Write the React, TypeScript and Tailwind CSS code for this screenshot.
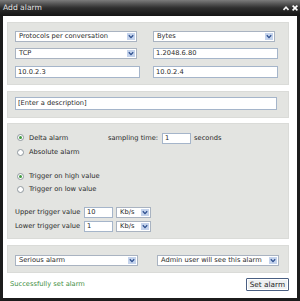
import React from "react";

const F = { fontFamily: '"DejaVu Sans", Verdana, sans-serif' };

function Arrow() {
  return (
    <div className="absolute right-[1px] top-[1px] bottom-[1px] w-[8px] bg-[#c4d3ec] flex items-center justify-center">
      <svg width="6" height="5" viewBox="0 0 6 5">
        <path d="M0.8 1.2 L3 3.6 L5.2 1.2" fill="none" stroke="#2d4f8e" strokeWidth="1.3" />
      </svg>
    </div>
  );
}

function Select({ text, w, h = 11 }: { text: string; w: number; h?: number }) {
  return (
    <div
      className="relative bg-white border border-[#a9b3c1] text-[#2a2a2a] flex items-center pl-[3px] leading-none whitespace-nowrap overflow-hidden"
      style={{ width: w, height: h }}
    >
      <span>{text}</span>
      <Arrow />
    </div>
  );
}

function Input({ text, w, h = 12 }: { text: string; w: number; h?: number }) {
  return (
    <div
      className="bg-white border border-[#a5b5ca] text-[#2a2a2a] flex items-center pl-[2px] leading-none whitespace-nowrap overflow-hidden"
      style={{ width: w, height: h }}
    >
      {text}
    </div>
  );
}

function Radio({ checked }: { checked?: boolean }) {
  return (
    <div className="w-[7px] h-[7px] rounded-full border border-[#8f979e] bg-white flex items-center justify-center ml-[2px] mr-[5px] shrink-0">
      {checked && <div className="w-[3px] h-[3px] rounded-full bg-[#3e9a3e]" />}
    </div>
  );
}

export default function App() {
  return (
    <div className="w-[300px] h-[301px] bg-[#1c1c1c] flex flex-col text-[6.7px] text-[#2a2a2a]" style={F}>
      <div className="h-[16px] shrink-0 bg-gradient-to-b from-[#7c7c7c] via-[#2e2e2e] to-[#151515] flex items-center justify-between pl-[3px] pr-[2px]">
        <span className="text-[7.6px] text-[#e6e6e6] leading-none">Add alarm</span>
        <div className="flex items-center gap-[3px]">
          <svg width="6" height="5" viewBox="0 0 6 5">
            <path d="M0.5 4 L3 1.2 L5.5 4" fill="none" stroke="#f2f2f2" strokeWidth="1.6" />
          </svg>
          <svg width="6" height="6" viewBox="0 0 6 6">
            <path d="M0.6 0.6 L5.4 5.4 M5.4 0.6 L0.6 5.4" stroke="#ffffff" strokeWidth="1.6" />
          </svg>
        </div>
      </div>
      <div className="flex-1 mx-[3px] mb-[3px] bg-white pl-[4px] pr-[8px] pt-[6px] flex flex-col">
        {/* Panel 1 */}
        <div className="h-[63px] bg-[#e3e4e1] border border-[#dadbd8] pt-[8px] pl-[7px] flex">
          <div className="w-[138px] flex flex-col gap-[6px]">
            <Select text="Protocols per conversation" w={122} />
            <Select text="TCP" w={122} />
            <div className="mt-[1px]">
              <Input text="10.0.2.3" w={125} />
            </div>
          </div>
          <div className="flex flex-col gap-[6px]">
            <Select text="Bytes" w={122} />
            <Input text="1.2048.6.80" w={125} h={11} />
            <div className="mt-[1px]">
              <Input text="10.0.2.4" w={125} />
            </div>
          </div>
        </div>
        {/* Panel 2 */}
        <div className="mt-[6px] h-[27px] bg-[#e3e4e1] border border-[#dadbd8] pt-[5px] pl-[7px]">
          <Input text="[Enter a description]" w={262} h={13} />
        </div>
        {/* Panel 3 */}
        <div className="mt-[5px] h-[116px] bg-[#e3e4e1] border border-[#dadbd8] pt-[7px] pl-[7px] flex flex-col">
          <div className="h-[14px] flex items-center">
            <div className="w-[93px] flex items-center">
              <Radio checked />
              <span>Delta alarm</span>
            </div>
            <span>sampling time:</span>
            <div className="ml-[4px]">
              <Input text="1" w={29} h={11} />
            </div>
            <span className="ml-[3px]">seconds</span>
          </div>
          <div className="h-[14px] flex items-center">
            <Radio />
            <span>Absolute alarm</span>
          </div>
          <div className="mt-[11px] h-[13px] flex items-center">
            <Radio checked />
            <span>Trigger on high value</span>
          </div>
          <div className="h-[13px] flex items-center">
            <Radio />
            <span>Trigger on low value</span>
          </div>
          <div className="mt-[9px] h-[14px] flex items-center">
            <span className="w-[69px] whitespace-nowrap">Upper trigger value</span>
            <Input text="10" w={29} h={11} />
            <div className="ml-[3px]">
              <Select text="Kb/s" w={35} />
            </div>
          </div>
          <div className="h-[14px] flex items-center">
            <span className="w-[69px] whitespace-nowrap">Lower trigger value</span>
            <Input text="1" w={29} h={11} />
            <div className="ml-[3px]">
              <Select text="Kb/s" w={35} />
            </div>
          </div>
        </div>
        {/* Panel 4 */}
        <div className="mt-[6px] h-[28px] bg-[#e3e4e1] border border-[#dadbd8] pt-[9px] pl-[7px] flex">
          <div className="w-[142px]">
            <Select text="Serious alarm" w={123} />
          </div>
          <Select text="Admin user will see this alarm" w={122} />
        </div>
        {/* Footer */}
        <div className="mt-[5px] flex items-center justify-between">
          <span className="ml-[3px] text-[#3f8f3f]">Successfully set alarm</span>
          <div className="h-[13px] px-[3px] border border-[#4a5f82] bg-[#eef0f2] rounded-[1px] flex items-center leading-none text-[7.3px] text-[#1e1e1e] shadow-[inset_0_0_0_1px_#ffffff]">
            Set alarm
          </div>
        </div>
      </div>
    </div>
  );
}
